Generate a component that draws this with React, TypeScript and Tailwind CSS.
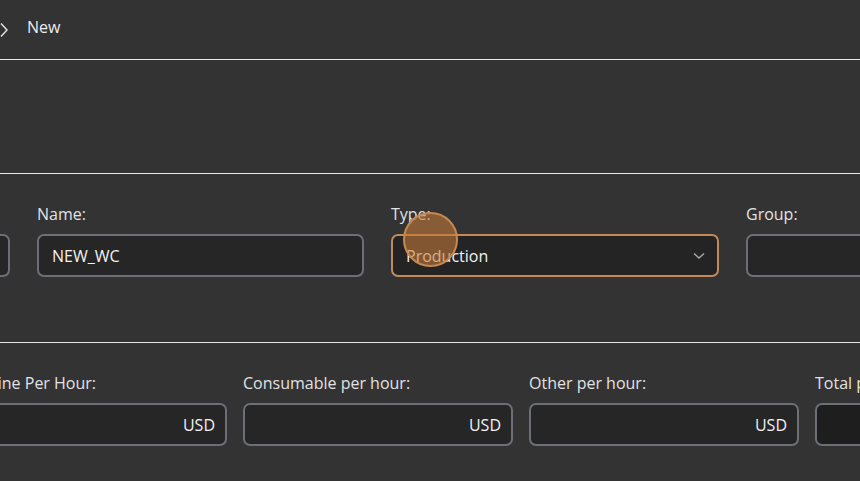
import React from "react";

const font = { fontFamily: '"Open Sans", "Noto Sans", sans-serif' };

function Field({ label, value, suffix, width, dark }: { label: string; value?: string; suffix?: string; width: string; dark?: boolean }) {
  return (
    <div className={`flex flex-col shrink-0 ${width}`}>
      <div className="h-[22px] leading-[22px] text-[16px] text-[#e2e2e2] mb-[9px] whitespace-nowrap">{label}</div>
      <div className={`h-[43px] rounded-[7px] border-2 border-[#6c6f76] ${dark ? "bg-[#1e1e1e]" : "bg-[#262626]"} flex items-center pl-[12px] pr-[10px] text-[16px] text-[#f2f2f2]`}>
        <span className="flex-1 pl-[1px]">{value}</span>
        {suffix && <span>{suffix}</span>}
      </div>
    </div>
  );
}

export default function App() {
  return (
    <div className="w-[860px] h-[481px] overflow-hidden bg-[#333333] flex flex-col" style={font}>
      <div className="h-[59px] flex items-center shrink-0">
        <svg width="12" height="16" viewBox="0 0 12 16" className="ml-[-2px]">
          <path d="M3 1.5 L9 8 L3 14.5" stroke="#e6e6e6" strokeWidth="1.4" fill="none" />
        </svg>
        <span className="ml-[17px] text-[16px] text-[#ececec] mt-[-5px]">New</span>
      </div>
      <div className="h-px bg-[#e8e8e8] shrink-0" />
      <div className="h-[113px] shrink-0" />
      <div className="h-px bg-[#e8e8e8] shrink-0" />
      <div className="h-[168px] shrink-0 pt-[29px] flex gap-[27px] ml-[-317px]">
        <Field label="Code:" width="w-[327px]" />
        <Field label="Name:" value="NEW_WC" width="w-[327px]" />
        <div className="flex flex-col shrink-0 w-[328px] relative">
          <div className="h-[22px] leading-[22px] text-[16px] text-[#e2e2e2] mb-[9px]">Type:</div>
          <div className="h-[43px] rounded-[7px] border-2 border-[#c38a55] ring-1 ring-[#2c3442] bg-[#242424] flex items-center pl-[13px] pr-[14px] text-[16px] text-[#f2f2f2]">
            <span className="flex-1">Production</span>
            <svg width="12" height="8" viewBox="0 0 12 8" className="mr-[-2px]">
              <path d="M1 1.5 L6 6 L11 1.5" stroke="#a8a8a8" strokeWidth="1.4" fill="none" />
            </svg>
          </div>
          <div className="absolute left-[12px] top-[9px] w-[55px] h-[55px] rounded-full bg-[rgba(196,122,56,0.58)] border-2 border-[#c8894f]" />
        </div>
        <Field label="Group:" width="w-[327px]" />
      </div>
      <div className="h-px bg-[#e8e8e8] shrink-0" />
      <div className="pt-[29px] flex gap-[16px] ml-[-43px]">
        <Field label="Machine Per Hour:" suffix="USD" width="w-[270px]" />
        <Field label="Consumable per hour:" suffix="USD" width="w-[270px]" />
        <Field label="Other per hour:" suffix="USD" width="w-[270px]" />
        <Field label="Total per hour:" suffix="USD" width="w-[270px]" dark />
      </div>
    </div>
  );
}
